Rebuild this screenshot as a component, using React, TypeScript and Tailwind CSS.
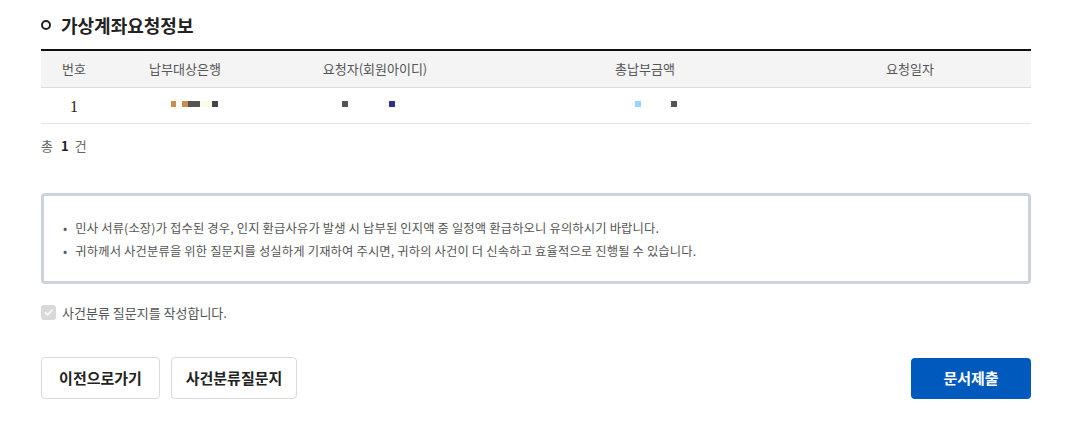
import React from 'react';

const font = { fontFamily: '"Noto Sans CJK KR", "Noto Sans", sans-serif' };

const Blocks: React.FC<{ items: { w: number; c: string; gap?: number }[] }> = ({ items }) => (
  <div className="flex items-start h-[6px]">
    {items.map((b, i) => (
      <span key={i} className="block h-[6px]" style={{ width: b.w, background: b.c, marginLeft: b.gap ?? 0 }} />
    ))}
  </div>
);

const App: React.FC = () => {
  return (
    <div className="w-[1089px] h-[429px] bg-white text-[#333]" style={font}>
      <div className="w-[990px] ml-[41px] pt-[13px]">
        {/* title */}
        <div className="flex items-center gap-[10px] h-[24px]">
          <span className="block w-[10px] h-[10px] rounded-full border-2 border-[#222]" />
          <h2 className="text-[18px] font-bold text-[#222] tracking-[0px]">가상계좌요청정보</h2>
        </div>

        {/* table */}
        <div className="mt-[12px] border-t-2 border-[#111]">
          <div className="grid grid-cols-[66px_156px_224px_316px_1fr] h-[37px] bg-[#f4f4f4] border-b border-[#dcdcdc] items-center text-[13px] text-[#555] text-center">
            <div>번호</div>
            <div>납부대상은행</div>
            <div>요청자(회원아이디)</div>
            <div>총납부금액</div>
            <div className="pr-[14px]">요청일자</div>
          </div>
          <div className="grid grid-cols-[66px_156px_224px_316px_1fr] h-[36px] border-b border-[#e3e3e3] items-center">
            <div className="text-center text-[16px] text-[#222] pt-[2px]" style={{ fontFamily: '"Liberation Serif", serif' }}>1</div>
            <div className="pl-[64px] -mt-[4px]">
              <Blocks
                items={[
                  { w: 5, c: '#c98d4d' },
                  { w: 6, c: '#c98d4d', gap: 6 },
                  { w: 12, c: '#555555' },
                  { w: 12, c: '#fffbea' },
                  { w: 6, c: '#444444' },
                ]}
              />
            </div>
            <div className="pl-[79px] -mt-[4px]">
              <Blocks items={[{ w: 6, c: '#555555' }, { w: 6, c: '#2e3383', gap: 41 }]} />
            </div>
            <div className="pl-[148px] -mt-[4px]">
              <Blocks items={[{ w: 6, c: '#99d1ff' }, { w: 6, c: '#555555', gap: 30 }]} />
            </div>
            <div />
          </div>
        </div>

        <p className="mt-[12px] flex text-[13px] text-[#666]">
          <span>총</span>
          <b className="ml-[8px] text-[#222]">1</b>
          <span className="ml-[6px]">건</span>
        </p>

        {/* notice */}
        <div className="mt-[37px] h-[91px] border-[3px] border-[#cdd3dd] rounded-[4px] px-[19px] pt-[23px] text-[12.3px] text-[#555] tracking-[0.15px]">
          <ul className="flex flex-col gap-[5px]">
            <li className="flex gap-[8px]">
              <span>•</span>
              <span>민사 서류(소장)가 접수된 경우, 인지 환급사유가 발생 시 납부된 인지액 중 일정액 환급하오니 유의하시기 바랍니다.</span>
            </li>
            <li className="flex gap-[8px]">
              <span>•</span>
              <span>귀하께서 사건분류을 위한 질문지를 성실하게 기재하여 주시면, 귀하의 사건이 더 신속하고 효율적으로 진행될 수 있습니다.</span>
            </li>
          </ul>
        </div>

        {/* checkbox */}
        <label className="mt-[19px] flex items-center gap-[6px] text-[13px] text-[#555]">
          <span className="flex items-center justify-center w-[15px] h-[15px] rounded-[3px] bg-[#d9d9d9]">
            <svg width="11" height="11" viewBox="0 0 12 12" fill="none" stroke="#f7f7f7" strokeWidth="2" strokeLinecap="round" strokeLinejoin="round">
              <path d="M2.5 6.2l2.4 2.4L9.6 3.6" />
            </svg>
          </span>
          사건분류 질문지를 작성합니다.
        </label>

        {/* buttons */}
        <div className="mt-[35px] flex items-center justify-between">
          <div className="flex gap-[11px]">
            <button className="w-[119px] h-[42px] rounded-[4px] border border-[#dadada] bg-white text-[15px] font-bold text-[#222]">
              이전으로가기
            </button>
            <button className="w-[126px] h-[42px] rounded-[4px] border border-[#dadada] bg-white text-[15px] font-bold text-[#222]">
              사건분류질문지
            </button>
          </div>
          <button className="w-[120px] h-[41px] rounded-[4px] bg-[#0059bd] text-[15px] font-bold text-white">
            문서제출
          </button>
        </div>
      </div>
    </div>
  );
};

export default App;
